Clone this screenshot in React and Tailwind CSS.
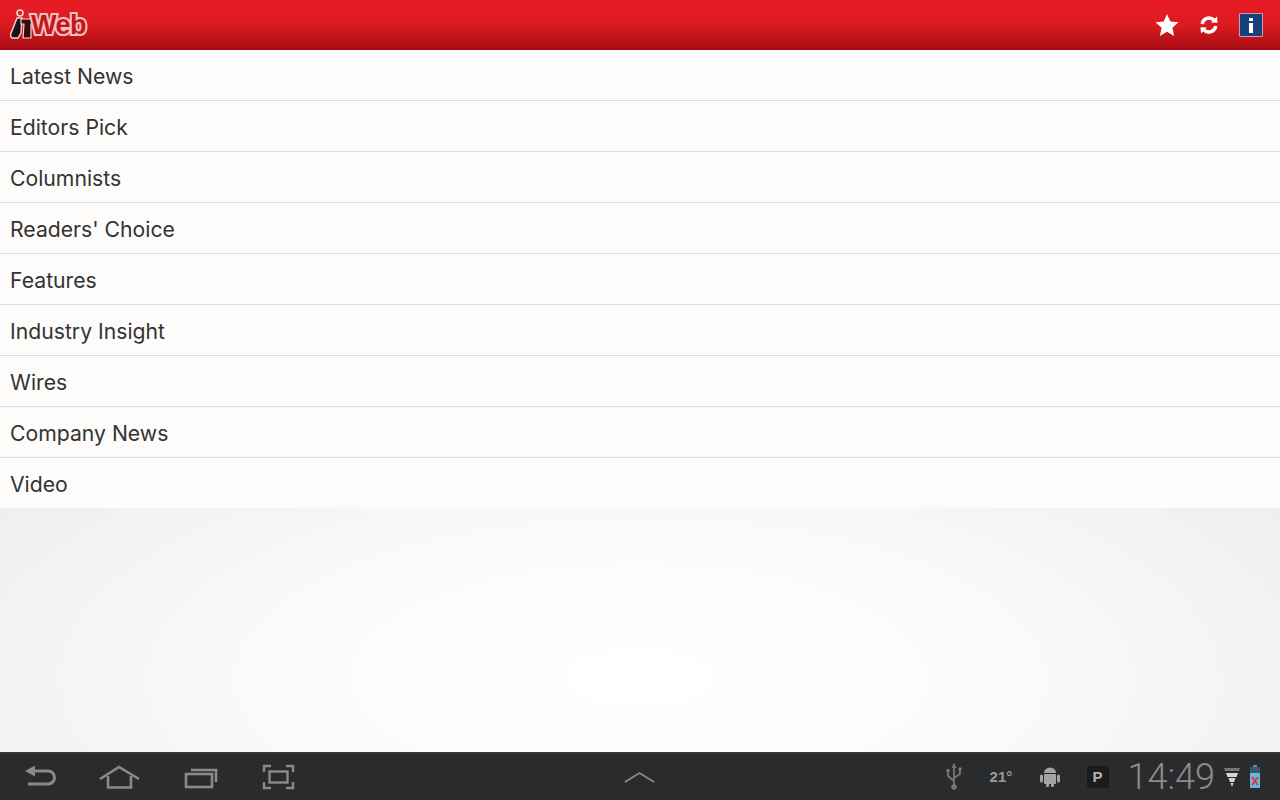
import React from "react";

const sections = [
  "Latest News",
  "Editors Pick",
  "Columnists",
  "Readers' Choice",
  "Features",
  "Industry Insight",
  "Wires",
  "Company News",
  "Video",
];

const Logo = () => (
  <div className="flex items-center h-[50px] pl-[10px]">
    <svg width="24" height="34" viewBox="0 0 24 34" className="mt-[-2px] shrink-0">
      <circle cx="10" cy="6" r="3" fill="none" stroke="#f5d5d5" strokeWidth="1.6" />
      <path d="M7 11 L12 11 L11 26 L8 31 L2 31 Q-1 28 2 24 Z" fill="#1a1416" stroke="#f5d5d5" strokeWidth="1.4" />
      <path d="M11 12 L24 12 L24 17 L21 17 L21 31 L13 31 L14 17 L11 17 Z" fill="#3a0a0c" stroke="#f5d5d5" strokeWidth="1.2" />
    </svg>
    <span className="ml-[-3px] mt-[1px] font-['Liberation_Sans',sans-serif] font-bold text-[27px] leading-none tracking-[-0.5px] text-[#c8141a] [-webkit-text-stroke:4px_#f0c4c4] [paint-order:stroke_fill]">
      Web
    </span>
  </div>
);

const TopBar = () => (
  <header className="flex items-center justify-between h-[50px] bg-gradient-to-b from-[#e81c24] via-[#dc1a21] to-[#a50c10]">
    <Logo />
    <div className="flex items-center pr-[17px]">
      <svg width="24" height="24" viewBox="0 0 24 24" fill="#fff">
        <path d="M12 1 L15.3 8.4 L23.5 9.3 L17.4 14.8 L19.1 22.9 L12 18.8 L4.9 22.9 L6.6 14.8 L.5 9.3 L8.7 8.4 Z" />
      </svg>
      <svg width="20" height="20" viewBox="0 0 20 20" className="ml-[20px]" fill="none">
        <path d="M3.2 9 A7 7 0 0 1 15 5" stroke="#fff" strokeWidth="3.4" />
        <path d="M12 7.5 L18.5 7.8 L18 1.5 Z" fill="#fff" />
        <path d="M16.8 11 A7 7 0 0 1 5 15" stroke="#fff" strokeWidth="3.4" />
        <path d="M8 12.5 L1.5 12.2 L2 18.5 Z" fill="#fff" />
      </svg>
      <div className="ml-[20px] flex items-center justify-center w-[24px] h-[24px] bg-[#17407f] border border-[#c9a0b0] rounded-[1px]">
        <div className="flex flex-col items-center gap-[2px]">
          <span className="w-[4px] h-[3px] bg-white" />
          <span className="w-[4px] h-[10px] bg-white" />
        </div>
      </div>
    </div>
  </header>
);

const SectionList = () => (
  <ul className="bg-[#fdfcfa] font-['Inter',sans-serif]">
    {sections.map((name, i) => (
      <li
        key={name}
        className={`flex items-center pl-[10px] pt-[3px] text-[21.2px] font-[420] text-[#333333] ${
          i < sections.length - 1 ? "h-[51px] border-b border-[#dcdcda]" : "h-[50px]"
        }`}
      >
        {name}
      </li>
    ))}
  </ul>
);

const NavBar = () => (
  <footer className="flex items-center h-[48px] bg-[#2a2b2d] border-t-2 border-[#353638] text-[#8f8f8f] relative">
    <div className="flex items-center pl-[24px]">
      <svg width="34" height="26" viewBox="0 0 34 26" fill="none" stroke="#8a8a8a" strokeWidth="3">
        <path d="M5 7 H24 A6.5 6.5 0 0 1 24 20 H4" />
        <path d="M1 7 L11 1.5 V12.5 Z" fill="#8a8a8a" stroke="none" />
      </svg>
      <svg width="42" height="26" viewBox="0 0 42 26" fill="none" stroke="#8a8a8a" strokeWidth="2.6" className="ml-[41px]">
        <path d="M1 15 L20 3 L40 15" />
        <path d="M9 12 V23.5 H32 V12" />
      </svg>
      <svg width="34" height="24" viewBox="0 0 34 24" fill="none" stroke="#8a8a8a" strokeWidth="2.6" className="ml-[43px]">
        <rect x="2" y="9" width="26" height="13" />
        <path d="M7 5 H32 V17" />
      </svg>
      <svg width="33" height="26" viewBox="0 0 33 26" fill="none" stroke="#8a8a8a" strokeWidth="2.4" className="ml-[44px]">
        <rect x="7.5" y="7.5" width="18" height="11" />
        <path d="M2 8 V2 H9 M24 2 H31 V8 M2 18 V24 H9 M24 24 H31 V18" />
      </svg>
    </div>

    <svg width="32" height="12" viewBox="0 0 32 12" fill="none" stroke="#8a8a8a" strokeWidth="1.8" className="absolute left-[624px] top-[17px]">
      <path d="M1 11 L15.5 2 L30 11" />
    </svg>

    <div className="ml-auto flex items-center pr-[19px]">
      <svg width="18" height="28" viewBox="0 0 18 28" fill="none" stroke="#777" strokeWidth="1.8">
        <path d="M9 1 V24" />
        <path d="M9 0 L11.5 5 H6.5 Z" fill="#777" stroke="none" />
        <circle cx="9" cy="24" r="2.8" fill="#777" stroke="none" />
        <path d="M3 8 V13 L9 18" />
        <path d="M15 7 V11 L9 15" />
        <rect x="1.5" y="6" width="3" height="3" fill="#777" stroke="none" />
        <rect x="13.5" y="4.5" width="3" height="3" fill="#777" stroke="none" />
      </svg>
      <span className="ml-[27px] w-[24px] font-['Liberation_Sans',sans-serif] font-bold text-[15px] text-[#9a9a9a]">21°</span>
      <svg width="24" height="22" viewBox="0 0 22 22" fill="#a3a3a3" className="ml-[24px]">
        <path d="M5 7 A6 5.5 0 0 1 17 7 Z" />
        <rect x="5" y="8" width="12" height="10" rx="1" />
        <rect x="1" y="8.5" width="3" height="8" rx="1.5" />
        <rect x="18" y="8.5" width="3" height="8" rx="1.5" />
        <rect x="7" y="17" width="3" height="4" rx="1" />
        <rect x="12" y="17" width="3" height="4" rx="1" />
      </svg>
      <span className="ml-[25px] flex items-center justify-center w-[22px] h-[22px] bg-[#1c1c1f] rounded-[2px] font-['Liberation_Sans',sans-serif] font-bold text-[15px] text-[#b5b5b5]">
        P
      </span>
      <span className="ml-[19px] font-['Roboto',sans-serif] font-light text-[36px] leading-none text-[#8c8c8c]">14:49</span>
      <svg width="16" height="20" viewBox="0 0 16 20" fill="#d8d8d8" className="ml-[9px]">
        <path d="M0 1 H16 L15 4 H1 Z" fill="#777" />
        <path d="M2 6 H14 L12.5 10 H3.5 Z" />
        <path d="M4.5 11 H11.5 L10 15 H6 Z" />
        <path d="M6.5 16 H9.5 L8 20 Z" />
      </svg>
      <svg width="12" height="24" viewBox="0 0 12 24" className="ml-[9px]">
        <rect x="4" y="0" width="4" height="2" fill="#5f8fa8" />
        <rect x="1" y="2" width="10" height="21" fill="#6fb6dc" />
        <rect x="1" y="2" width="10" height="6" fill="#3a5a6c" />
        <path d="M3 12 L9 20 M9 12 L3 20" stroke="#d83a3a" strokeWidth="2" />
      </svg>
    </div>
  </footer>
);

export default function App() {
  return (
    <div className="flex flex-col h-screen w-full overflow-hidden">
      <TopBar />
      <SectionList />
      <main className="flex-1 bg-[radial-gradient(ellipse_760px_300px_at_640px_170px,#ffffff_0%,#fbfbfb_45%,#efefef_100%)]" />
      <NavBar />
    </div>
  );
}
